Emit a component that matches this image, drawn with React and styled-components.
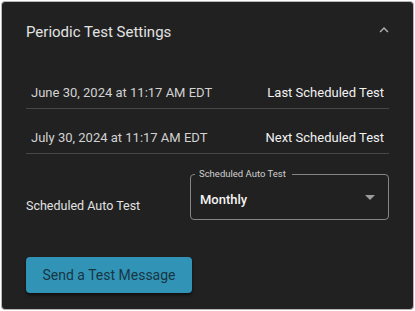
import styled, { createGlobalStyle } from "styled-components";

const GlobalStyle = createGlobalStyle`
  body {
    margin: 0;
    background: #ffffff;
    font-family: Roboto, "Liberation Sans", sans-serif;
  }
`;

const Page = styled.div`
  padding: 1px;
`;

const Card = styled.section`
  box-sizing: border-box;
  width: 413px;
  height: 309px;
  background: #212121;
  border: 1px solid #b8b8b8;
  border-radius: 4px;
  padding: 18px 24px 0 24px;
  color: #e0e0e0;
`;

const Header = styled.div`
  display: flex;
  align-items: center;
  justify-content: space-between;
  height: 24px;
`;

const Title = styled.h2`
  margin: 0;
  font-size: 15px;
  font-weight: 400;
  line-height: 24px;
  color: #e3e3e3;
`;

const Chevron = styled.svg`
  width: 18px;
  height: 18px;
  margin-right: -4px;
  margin-top: -4px;
  fill: #b0b0b0;
`;

const List = styled.div`
  margin-top: 20px;
`;

const Row = styled.div`
  display: flex;
  justify-content: space-between;
  padding: 19px 5px 5px;
  line-height: 20px;
  font-size: 13px;
  border-bottom: 1px solid #474747;
`;

const DateText = styled.span`
  color: #d2d2d2;
`;

const RowName = styled.span`
  color: #f2f2f2;
`;

const SelectRow = styled.div`
  display: flex;
  align-items: flex-end;
  justify-content: space-between;
  margin-top: 20px;
`;

const Label = styled.span`
  font-size: 12.5px;
  line-height: 20px;
  margin-bottom: 4px;
  color: #e2e2e2;
`;

const SelectBox = styled.div`
  position: relative;
  box-sizing: border-box;
  width: 199px;
  height: 46px;
  border: 1px solid #858585;
  border-radius: 4px;
  display: flex;
  align-items: center;
  justify-content: space-between;
  padding: 0 13px 0 9px;
`;

const Legend = styled.span`
  position: absolute;
  top: -7px;
  left: 4px;
  padding: 0 6px 0 4px;
  background: #212121;
  font-size: 9.5px;
  line-height: 12px;
  color: #d0d0d0;
`;

const Value = styled.span`
  margin-top: 5px;
  font-size: 13px;
  font-weight: 500;
  color: #f4f4f4;
`;

const Caret = styled.span`
  width: 0;
  height: 0;
  border-left: 5px solid transparent;
  border-right: 5px solid transparent;
  border-top: 5px solid #9c9c9c;
`;

const Button = styled.button`
  display: block;
  margin-top: 37px;
  width: 166px;
  height: 36px;
  border: none;
  border-radius: 4px;
  background: #3194b7;
  color: #183644;
  font-family: inherit;
  font-size: 14px;
  box-shadow: 0 2px 3px rgba(0, 0, 0, 0.55);
  cursor: pointer;
`;

const tests = [
  { date: "June 30, 2024 at 11:17 AM EDT", name: "Last Scheduled Test" },
  { date: "July 30, 2024 at 11:17 AM EDT", name: "Next Scheduled Test" },
];

export default function App() {
  return (
    <Page>
      <GlobalStyle />
      <Card>
        <Header>
          <Title>Periodic Test Settings</Title>
          <Chevron viewBox="0 0 24 24">
            <path d="m12 8-6 6 1.41 1.41L12 10.83l4.59 4.58L18 14z" />
          </Chevron>
        </Header>
        <List>
          {tests.map((t) => (
            <Row key={t.name}>
              <DateText>{t.date}</DateText>
              <RowName>{t.name}</RowName>
            </Row>
          ))}
        </List>
        <SelectRow>
          <Label>Scheduled Auto Test</Label>
          <SelectBox>
            <Legend>Scheduled Auto Test</Legend>
            <Value>Monthly</Value>
            <Caret />
          </SelectBox>
        </SelectRow>
        <Button>Send a Test Message</Button>
      </Card>
    </Page>
  );
}
